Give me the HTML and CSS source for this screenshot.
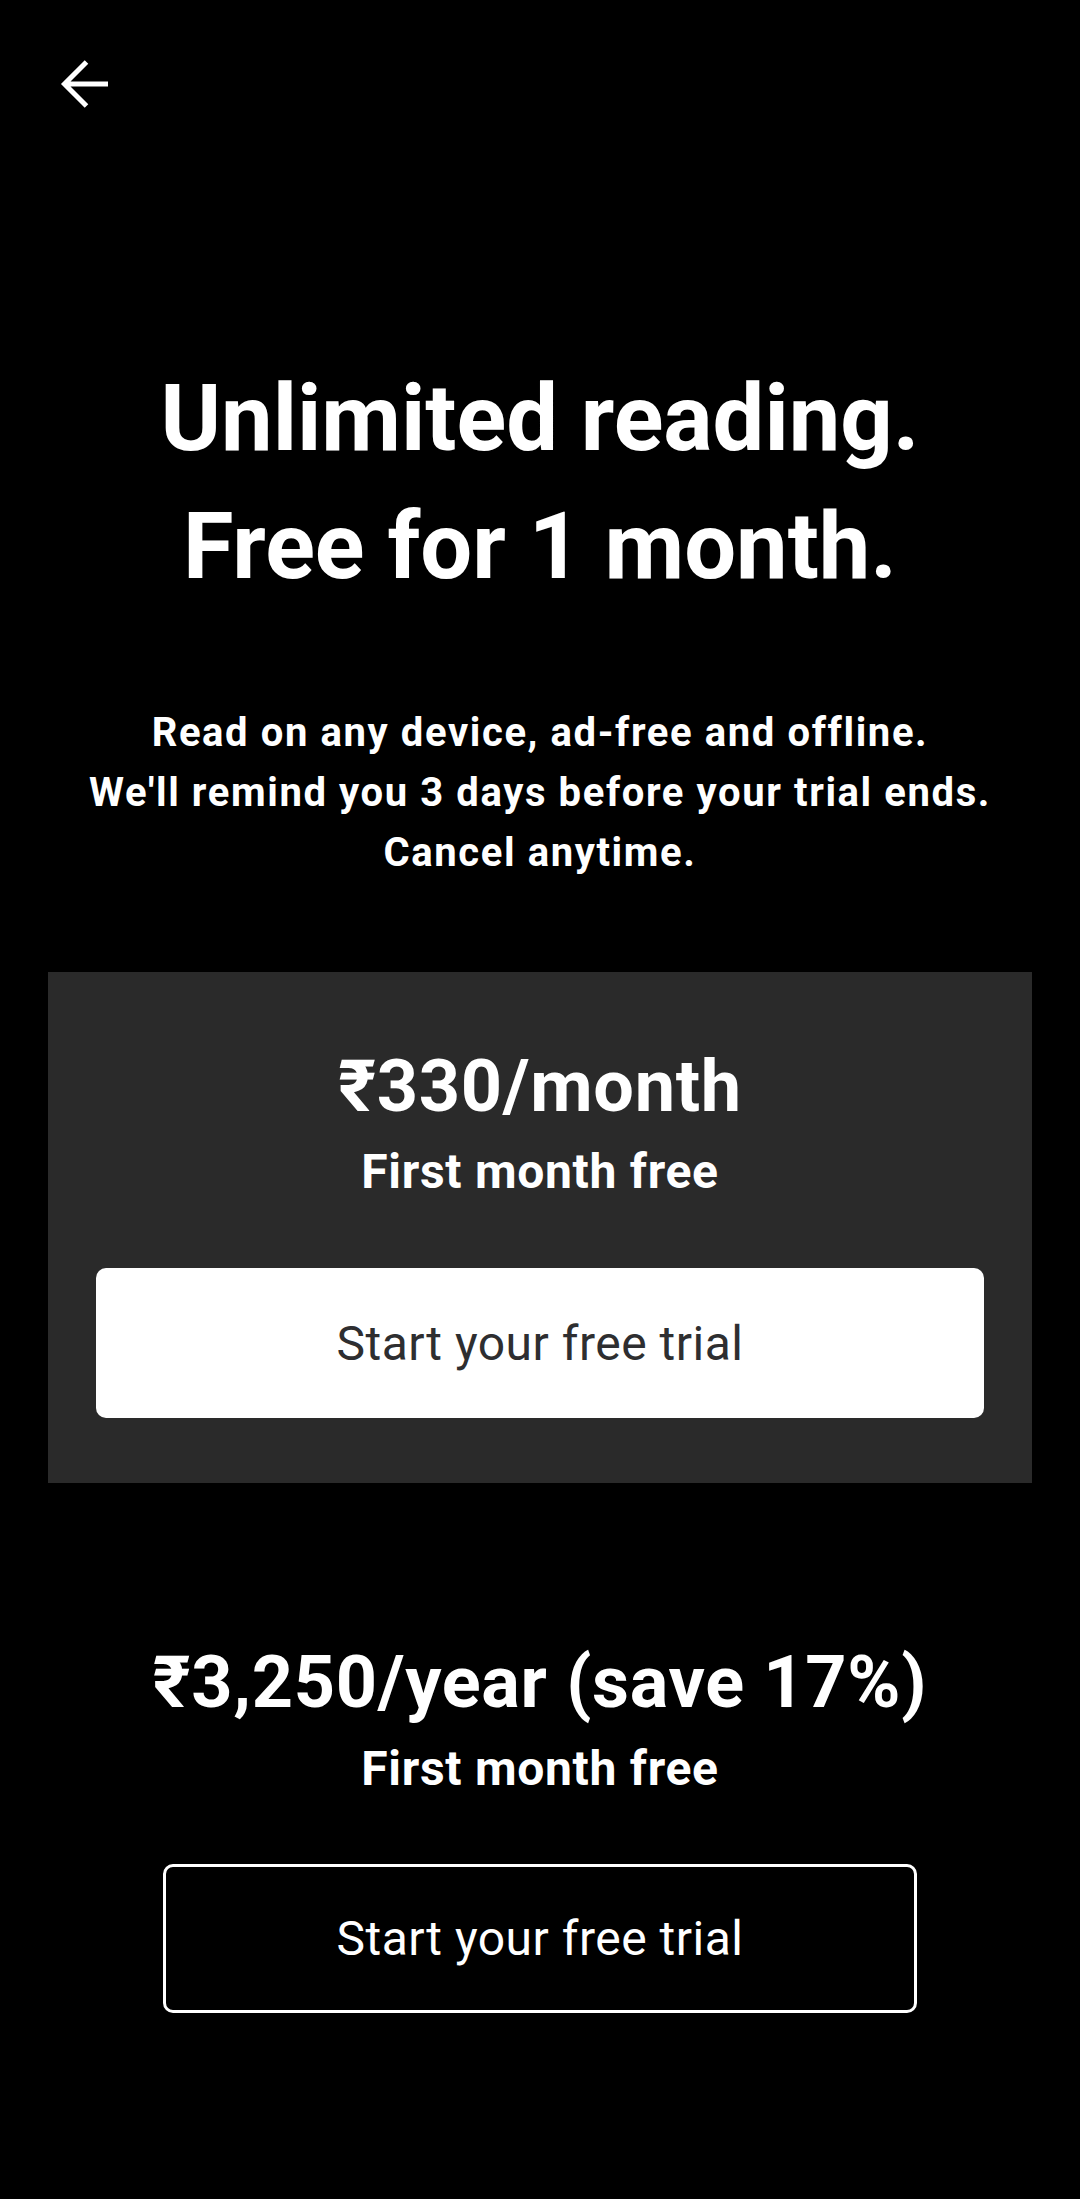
FILE: index.html
```html
<!DOCTYPE html>
<html lang="en">
<head>
<meta charset="utf-8">
<title>Unlimited reading</title>
<link rel="stylesheet" href="styles.css">
</head>
<body>
<div class="screen">
  <header class="topbar">
    <svg class="back" width="48" height="48" viewBox="0 0 48 48" aria-label="Back">
      <path d="M48 24H5M26.5 2L4.5 24L26.5 46" fill="none" stroke="#fff" stroke-width="5"/>
    </svg>
  </header>

  <h1 class="title">Unlimited reading.<br>Free for 1 month.</h1>

  <p class="subtitle">Read on any device, ad-free and offline.<br>We'll remind you 3 days before your trial ends.<br>Cancel anytime.</p>

  <section class="plan plan-card">
    <div class="price">₹330/month</div>
    <div class="note">First month free</div>
    <button class="btn btn-solid">Start your free trial</button>
  </section>

  <section class="plan plan-plain">
    <div class="price">₹3,250/year (save 17%)</div>
    <div class="note">First month free</div>
    <button class="btn btn-outline">Start your free trial</button>
  </section>
</div>
</body>
</html>
```

FILE: styles.css
```css
* { box-sizing: border-box; }
html, body {
  margin: 0;
  padding: 0;
  background: #000;
}
body {
  font-family: Roboto, "Noto Sans", "DejaVu Sans", sans-serif;
  color: #fff;
  width: 1080px;
  min-height: 2199px;
}
.screen {
  display: flex;
  flex-direction: column;
  align-items: center;
}
.topbar {
  align-self: stretch;
  display: flex;
  padding: 60px 0 0 60px;
  height: 108px;
}
.back { display: block; }

.title {
  margin: 247px 0 0;
  font-size: 92px;
  line-height: 128px;
  font-weight: 700;
  text-align: center;
}
.subtitle {
  margin: 92px 0 0;
  font-size: 40px;
  line-height: 60px;
  font-weight: 700;
  letter-spacing: 1.6px;
  text-align: center;
}
.plan {
  display: flex;
  flex-direction: column;
  align-items: center;
  text-align: center;
}
.plan-card {
  margin-top: 89px;
  width: 984px;
  background: #2a2a2a;
  padding: 73px 48px 65px;
}
.plan-plain {
  margin-top: 158px;
  width: 984px;
}
.price {
  font-size: 72px;
  line-height: 84px;
  font-weight: 700;
  letter-spacing: 0.7px;
  white-space: nowrap;
}
.note {
  margin-top: 15px;
  font-size: 48px;
  line-height: 56px;
  font-weight: 700;
  letter-spacing: 0.7px;
}
.btn {
  margin-top: 68px;
  font-family: Roboto, "Noto Sans", sans-serif;
  font-size: 48px;
  font-weight: 400;
  letter-spacing: 0.5px;
  display: flex;
  align-items: center;
  justify-content: center;
  border-radius: 10px;
  cursor: pointer;
}
.btn-solid {
  width: 888px;
  height: 150px;
  background: #fff;
  color: #2e2e30;
  border: none;
}
.btn-outline {
  margin-top: 67px;
  width: 754px;
  height: 149px;
  background: #000;
  color: #fff;
  border: 3px solid #fff;
}
.plan-plain .note { margin-top: 16px; }
```
